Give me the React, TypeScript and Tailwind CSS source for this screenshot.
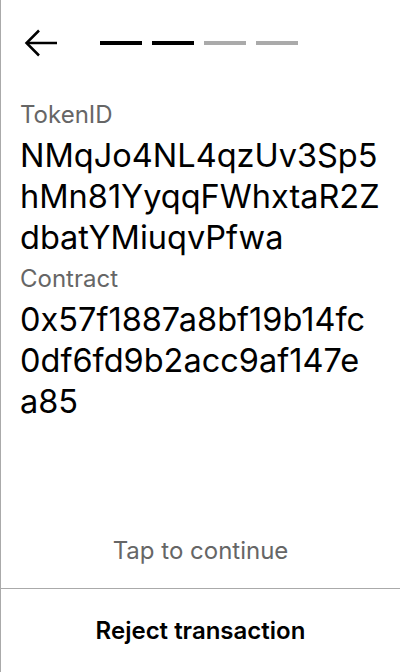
const steps = [true, true, false, false];

const Field = ({ label, lines }: { label: string; lines: string[] }) => (
  <div className="flex flex-col">
    <span className="text-[24px] leading-[41px] text-[#666666]">{label}</span>
    {lines.map((line) => (
      <span key={line} className="text-[32.5px] leading-[41px] text-black whitespace-nowrap">
        {line}
      </span>
    ))}
  </div>
);

export default function App() {
  return (
    <div
      className="h-[672px] w-[400px] flex flex-col bg-white border-l border-[#aaaaaa]"
      style={{ fontFamily: "Inter, 'Noto Sans', sans-serif" }}
    >
      <div className="flex items-center h-[86px] pl-[22px]">
        <button className="w-[36px] h-[36px] flex items-center justify-center">
          <svg width="34" height="28" viewBox="0 0 34 28" fill="none" stroke="black" strokeWidth="2.5">
            <path d="M33 14H3" />
            <path d="M15 1.5L2.5 14L15 26.5" />
          </svg>
        </button>
        <div className="flex gap-[10px] ml-[41px]">
          {steps.map((done, i) => (
            <div key={i} className={done ? "w-[42px] h-[4px] bg-black" : "w-[42px] h-[4px] bg-[#aaaaaa]"} />
          ))}
        </div>
      </div>
      <div className="flex flex-col px-[19px] pt-[8px]">
        <Field label="TokenID" lines={["NMqJo4NL4qzUv3Sp5", "hMn81YyqqFWhxtaR2Z", "dbatYMiuqvPfwa"]} />
        <Field label="Contract" lines={["0x57f1887a8bf19b14fc", "0df6fd9b2acc9af147e", "a85"]} />
      </div>
      <div className="flex-1 flex items-end justify-center pb-[22px]">
        <span className="text-[24px] leading-[30px] text-[#666666]">Tap to continue</span>
      </div>
      <div className="h-[84px] border-t border-[#aaaaaa] flex items-center justify-center">
        <span className="text-[24px] font-semibold text-black">Reject transaction</span>
      </div>
    </div>
  );
}
